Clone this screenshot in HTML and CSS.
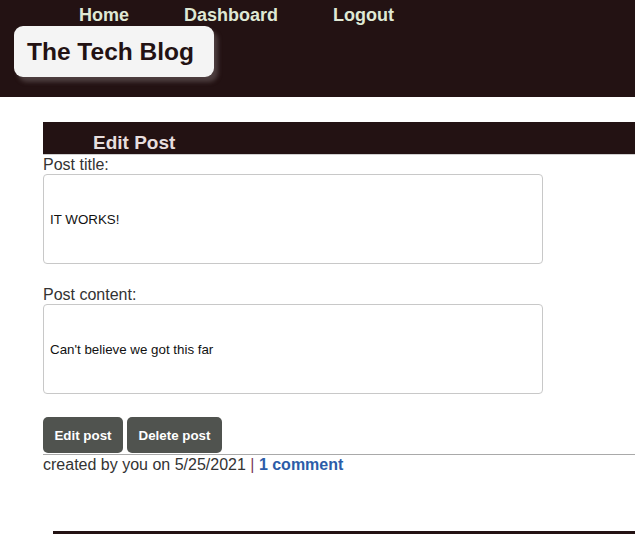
FILE: index.html
```html
<!DOCTYPE html>
<html>
<head>
<meta charset="utf-8">
<title>The Tech Blog</title>
<link rel="stylesheet" href="styles.css">
</head>
<body>
<header class="site-header">
  <nav class="nav">
    <a href="#" class="nav-link">Home</a>
    <a href="#" class="nav-link">Dashboard</a>
    <a href="#" class="nav-link">Logout</a>
  </nav>
  <div class="logo">The Tech Blog</div>
</header>
<main class="main">
  <section class="post">
    <h2 class="post-head">Edit Post</h2>
    <form class="post-form">
      <label class="field-label">Post title:</label>
      <input class="field" type="text" value="IT WORKS!">
      <label class="field-label second">Post content:</label>
      <input class="field" type="text" value="Can't believe we got this far">
      <div class="actions">
        <button type="button" class="btn">Edit post</button>
        <button type="button" class="btn">Delete post</button>
      </div>
    </form>
    <p class="meta">created by you on 5/25/2021 <span class="sep">|</span> <a href="#" class="comments">1 comment</a></p>
  </section>
</main>
<footer class="footer"></footer>
</body>
</html>
```
FILE: styles.css
```css
html, body {
  margin: 0;
  padding: 0;
  overflow: hidden;
}
body {
  font-family: "Liberation Sans", Arial, sans-serif;
  background: #ffffff;
  color: #333333;
  width: 635px;
}
.site-header {
  background: #231213;
  height: 97px;
  box-sizing: border-box;
  padding-top: 3px;
}
.nav {
  display: flex;
  gap: 55px;
  padding-left: 79px;
  height: 23px;
}
.nav-link {
  color: #dfe8d4;
  font-weight: bold;
  font-size: 18px;
  text-decoration: none;
  line-height: 24px;
}
.logo {
  margin-left: 14px;
  width: 200px;
  height: 51px;
  box-sizing: border-box;
  padding-left: 13px;
  background: #f4f4f4;
  border-radius: 9px;
  color: #231213;
  font-weight: bold;
  font-size: 24.5px;
  line-height: 51px;
  box-shadow: 4px 5px 4px #4d3e3f;
}
.main {
  padding-top: 25px;
  padding-left: 43px;
}
.post-head {
  margin: 0;
  background: #231213;
  color: #e7dede;
  font-size: 19px;
  font-weight: bold;
  height: 32px;
  line-height: 41px;
  padding-left: 50px;
  border-bottom: 1px solid #cfcfcf;
  overflow: hidden;
}
.post-form {
  display: flex;
  flex-direction: column;
  align-items: flex-start;
}
.field-label {
  font-size: 16px;
  line-height: 19px;
  color: #333333;
}
.field-label.second {
  margin-top: 21px;
}
.field {
  width: 500px;
  height: 90px;
  box-sizing: border-box;
  border: 1px solid #c8c8c8;
  border-radius: 4px;
  padding: 0 6px;
  font-family: "Liberation Sans", Arial, sans-serif;
  font-size: 13.33px;
  color: #111111;
  margin: 0;
  background: #ffffff;
}
.actions {
  display: flex;
  gap: 4px;
  margin-top: 23px;
}
.btn {
  background: #50534f;
  color: #ffffff;
  border: none;
  border-radius: 5px;
  height: 36px;
  padding: 0 11px;
  font-family: "Liberation Sans", Arial, sans-serif;
  font-weight: bold;
  font-size: 13.33px;
}
.btn:first-child {
  width: 80px;
}
.btn:last-child {
  width: 95px;
}
.meta {
  margin: 1px 0 0 0;
  border-top: 1px solid #a9a9a9;
  font-size: 16px;
  line-height: 19px;
  color: #333333;
}
.sep {
  color: #7b3a5d;
}
.comments {
  color: #2b5ca8;
  font-weight: bold;
  text-decoration: none;
}
.footer {
  margin-top: 57px;
  margin-left: 53px;
  height: 10px;
  background: #231213;
}
```
